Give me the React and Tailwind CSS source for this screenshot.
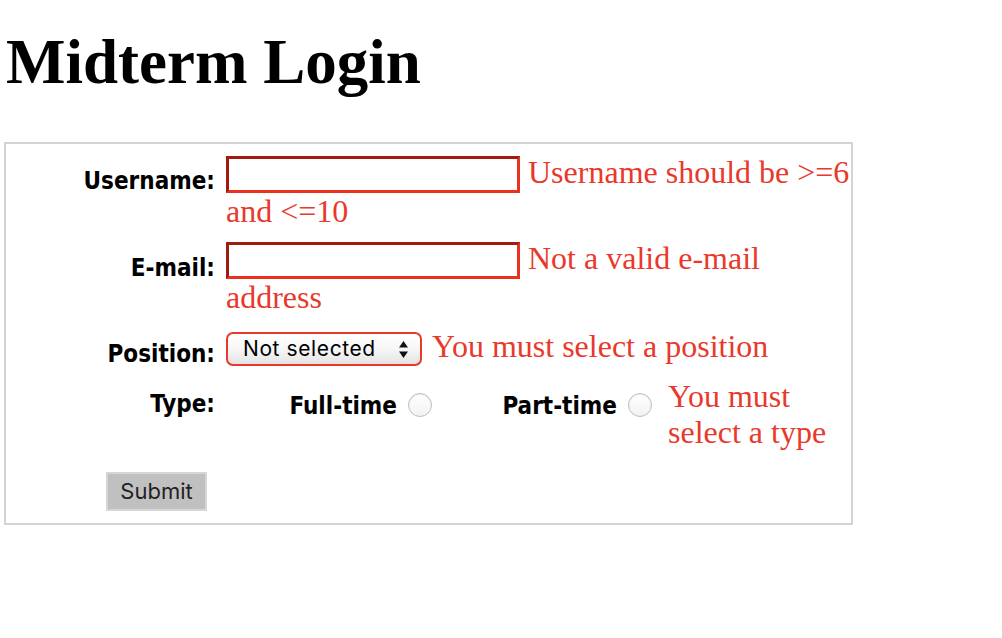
export default function App() {
  const labelBase =
    "shrink-0 text-right font-bold text-[24px] leading-[28px] text-black [font-family:'DejaVu_Sans_Condensed','DejaVu_Sans',sans-serif] [font-stretch:condensed]";
  const errCls =
    "text-[32px] text-[#e8392b] [font-family:'Liberation_Serif','Times_New_Roman',serif] whitespace-nowrap";
  const inputCls =
    "block w-[294px] h-[37px] shrink-0 border-[3px] border-t-[#a01a10] border-l-[#a01a10] border-b-[#e8321f] border-r-[#e8321f] bg-white outline-none";
  const radioCls =
    "block w-[24px] h-[24px] shrink-0 rounded-full border border-[#bdbdbd] bg-gradient-to-b from-white to-[#f2f2f2] shadow-[inset_0_1px_1px_rgba(0,0,0,0.08)]";

  return (
    <div className="bg-white min-h-[638px] w-[1002px]">
      <h1 className="pt-[25px] pl-[6px] text-[63px] leading-[74px] font-bold text-black [font-family:'Liberation_Serif','Times_New_Roman',serif]">
        Midterm Login
      </h1>

      <div className="ml-[4px] mt-[43px] w-[849px] border-2 border-[#d3d3d3] pt-[12px] pb-[12px]">
        {/* Username */}
        <div className="flex gap-[11px]">
          <div className={labelBase + " w-[209px] mt-[11px]"}>Username:</div>
          <div>
            <div className="flex items-start h-[37px]">
              <input className={inputCls} />
              <span className={errCls + " ml-[8px] leading-[37px] -mt-[2px]"}>
                Username should be &gt;=6
              </span>
            </div>
            <div className={errCls + " leading-[36px]"}>and &lt;=10</div>
          </div>
        </div>

        {/* E-mail */}
        <div className="flex gap-[11px] mt-[13px]">
          <div className={labelBase + " w-[209px] mt-[12px]"}>E-mail:</div>
          <div>
            <div className="flex items-start h-[37px]">
              <input className={inputCls} />
              <span className={errCls + " ml-[8px] leading-[37px] -mt-[2px]"}>
                Not a valid e-mail
              </span>
            </div>
            <div className={errCls + " leading-[36px]"}>address</div>
          </div>
        </div>

        {/* Position */}
        <div className="flex gap-[11px] mt-[17px]">
          <div className={labelBase + " w-[209px] mt-[8px]"}>Position:</div>
          <div className="flex items-start h-[34px]">
            <div className="relative flex items-center w-[196px] h-[34px] rounded-[7px] border-2 border-[#e8392b] bg-gradient-to-b from-white via-[#f6f6f6] to-[#e4e4e4] shadow-[inset_0_1px_0_rgba(255,255,255,0.9)]">
              <span className="pl-[15px] text-[21px] tracking-[0.6px] leading-[24px] text-black [font-family:Inter,'Liberation_Sans',sans-serif]">
                Not selected
              </span>
              <svg
                className="absolute right-[11px] top-[6px]"
                width="11"
                height="19"
                viewBox="0 0 11 19"
              >
                <polygon points="5.5,1 10,7.5 1,7.5" fill="#111" />
                <polygon points="1,11.5 10,11.5 5.5,18" fill="#111" />
              </svg>
            </div>
            <span className={errCls + " ml-[10px] leading-[37px] -mt-[4px]"}>
              You must select a position
            </span>
          </div>
        </div>

        {/* Type */}
        <div className="flex gap-[11px] mt-[10px]">
          <div className={labelBase + " w-[209px] mt-[12px]"}>Type:</div>
          <div className="flex items-start">
            <div className={labelBase + " w-[171px] mt-[14px]"}>Full-time</div>
            <span className={radioCls + " ml-[11px] mt-[15px]"} />
            <div className={labelBase + " w-[185px] mt-[14px]"}>Part-time</div>
            <span className={radioCls + " ml-[11px] mt-[15px]"} />
            <div className={errCls + " ml-[16px] leading-[36px]"}>
              You must
              <br />
              select a type
            </div>
          </div>
        </div>

        {/* Submit */}
        <div className="mt-[22px] pl-[100px]">
          <button className="w-[101px] h-[39px] bg-[#c0c0c0] border-2 border-[#d6d6d6] text-[22px] text-[#222] [font-family:Inter,'Liberation_Sans',sans-serif]">
            Submit
          </button>
        </div>
      </div>
    </div>
  );
}
